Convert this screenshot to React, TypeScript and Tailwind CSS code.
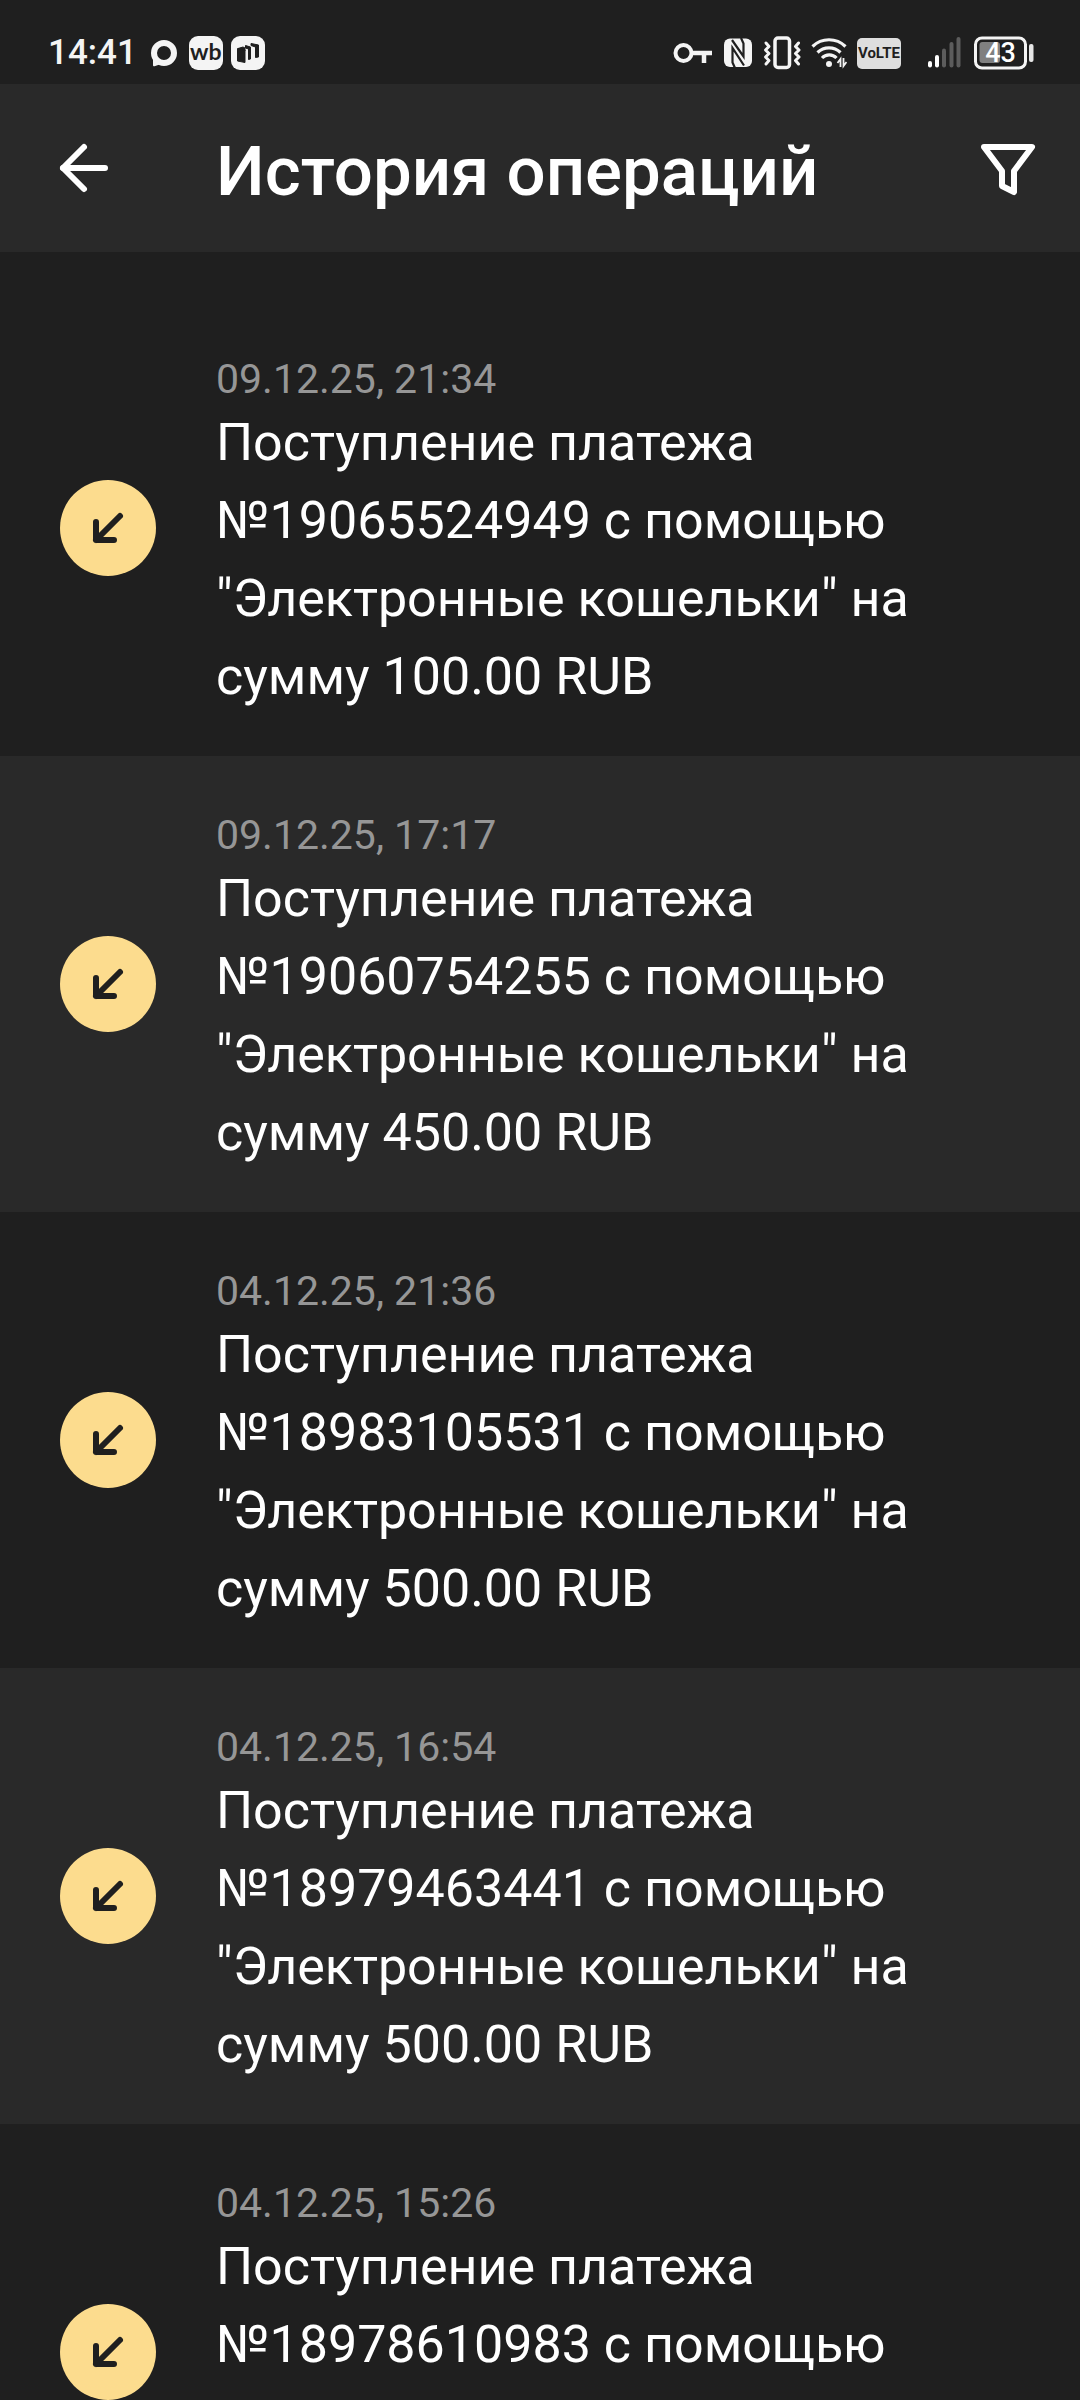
import React from 'react';
import { ArrowLeft } from 'lucide-react';

interface Operation {
  id: string;
  date: string;
  amount: string;
}

const operations: Operation[] = [
  { id: '19065524949', date: '09.12.25, 21:34', amount: '100.00' },
  { id: '19060754255', date: '09.12.25, 17:17', amount: '450.00' },
  { id: '18983105531', date: '04.12.25, 21:36', amount: '500.00' },
  { id: '18979463441', date: '04.12.25, 16:54', amount: '500.00' },
  { id: '18978610983', date: '04.12.25, 15:26', amount: '500.00' },
];

const describe = ({ id, amount }: Operation) =>
  `Поступление платежа №${id} с помощью "Электронные кошельки" на сумму ${amount} RUB`;

const ChatIcon = () => (
  <svg width="26" height="28" viewBox="0 0 26 28" fill="none">
    <circle cx="13" cy="14" r="10" stroke="#f4f4f4" strokeWidth="6" />
    <path d="M2 17v9c0 1 .6 1.4 1.5 1.2L10 25Z" fill="#f4f4f4" />
  </svg>
);

const CardsIcon = () => (
  <svg width="34" height="34" viewBox="0 0 34 34">
    <rect width="34" height="34" rx="9" fill="#f4f4f4" />
    <g fill="#1f1f1f" stroke="#1f1f1f" strokeLinejoin="round">
      <path d="m6.500 12.500 7.500 1.500v12.500l-7.500-1.500Z" />
      <path d="m7 12.500 5-1.500 2 1v3Z" />
      <path d="m14.500 9.500 5 1.500v12l-2 .500V13l-3-1Z" />
      <path d="m20 7.500 7.500 1.500v12l-3 .500V11l-4.500-1.500Z" />
    </g>
  </svg>
);

const KeyIcon = () => (
  <svg width="40" height="34" viewBox="0 0 40 34" fill="none" stroke="#f4f4f4">
    <circle cx="10.500" cy="17" r="8" strokeWidth="4" />
    <path d="M18.500 17H39M31 17v10" strokeWidth="4.500" />
  </svg>
);

const NfcIcon = () => (
  <svg width="30" height="34" viewBox="0 0 30 34">
    <rect x="1" y="2.500" width="28" height="28.500" rx="6" fill="#f4f4f4" />
    <path d="m9 4 11.500 16.500V7.500L18 2M12 32l-2.500-5.500V12L21 29.500" fill="none" stroke="#1f1f1f" strokeWidth="2.200" />
  </svg>
);

const VibrateIcon = () => (
  <svg width="38" height="34" viewBox="0 0 38 34" fill="none" stroke="#f4f4f4" strokeLinecap="round" strokeLinejoin="round">
    <rect x="12" y="2" width="14.500" height="29.500" rx="3" strokeWidth="3.500" />
    <path d="m3 7 3 3.500L2.500 14 6 17.500 2.500 21 6 24.500 3 28" strokeWidth="3" />
    <path d="m35.500 7-3 3.500 3.500 3.500-3.500 3.500L36 21l-3.500 3.500 3 3.500" strokeWidth="3" />
  </svg>
);

const WifiIcon = () => (
  <svg width="36" height="34" viewBox="0 0 36 34" fill="none" stroke="#f4f4f4">
    <path d="M1.500 10.500a23.500 23.500 0 0 1 33 0M6.500 16.500a16.500 16.500 0 0 1 23 0M11 22a10 10 0 0 1 14.500 0" strokeWidth="3.200" />
    <circle cx="18" cy="28" r="3" fill="#f4f4f4" stroke="none" />
    <path d="M29.500 31v-8l-3 4M32.500 22v8l3-4" strokeWidth="1.800" />
  </svg>
);

const SignalIcon = () => (
  <svg width="34" height="34" viewBox="0 0 34 34">
    <rect x="1" y="25" width="4" height="6.500" rx="2" fill="#fff" />
    <rect x="8" y="19" width="4" height="12.500" rx="2" fill="#fff" />
    <rect x="15" y="12.500" width="4" height="19" rx="2" fill="#5c5c5c" />
    <rect x="22.500" y="6" width="4" height="25.500" rx="2" fill="#5c5c5c" />
    <rect x="29.500" y="1" width="4" height="30.500" rx="2" fill="#5c5c5c" />
  </svg>
);

const BatteryIcon = () => (
  <svg width="64" height="34" viewBox="0 0 64 34">
    <rect x="4.500" y="2" width="50" height="30" rx="6.500" fill="none" stroke="#f4f4f4" strokeWidth="3" />
    <rect x="8.500" y="6" width="20.500" height="21" rx="3" fill="#808080" />
    <rect x="58" y="8" width="4.500" height="18" rx="2" fill="#e6e6e6" />
    <text x="29.500" y="26" textAnchor="middle" fill="#fff" fontSize="27" fontWeight="500">43</text>
  </svg>
);

const FilterIcon = () => (
  <svg width="72" height="72" viewBox="0 0 24 24" fill="none" stroke="currentColor" strokeWidth="2" strokeLinejoin="round">
    <path d="M20 5H4l6 8v5l4 2v-7Z" />
  </svg>
);

const IncomingIcon = () => (
  <svg width="48" height="48" viewBox="0 0 48 48" fill="none" stroke="#1f1f1f" strokeWidth="6" strokeLinecap="round" strokeLinejoin="round">
    <path d="M36 12 12 36M12 18v18h18" />
  </svg>
);

const StatusBar = () => (
  <div className="flex h-[84px] shrink-0 items-center justify-between pt-9 pb-[14px] pl-12 pr-[45px]">
    <div className="flex items-center gap-2">
      <span className="mr-1.5 text-[35px] leading-[34px] font-medium text-[#f4f4f4]">14:41</span>
      <ChatIcon />
      <span className="ml-1 flex size-[34px] items-center justify-center rounded-[9px] bg-[#f4f4f4] pb-1 font-['Lato'] text-[23px] leading-[34px] font-bold text-[#1f1f1f]">
        wb
      </span>
      <CardsIcon />
    </div>
    <div className="flex items-center gap-[10px]">
      <KeyIcon />
      <NfcIcon />
      <VibrateIcon />
      <WifiIcon />
      <span className="flex h-[31px] w-11 items-center justify-center rounded-[5px] bg-[#dedede] text-[15px] font-bold text-[#1f1f1f]">
        VoLTE
      </span>
      <span className="ml-4">
        <SignalIcon />
      </span>
      <BatteryIcon />
    </div>
  </div>
);

const OperationRow: React.FC<{ operation: Operation }> = ({ operation }) => (
  <li className="flex items-center gap-[60px] px-[60px] odd:bg-[#1f1f1f] even:bg-[#292929]">
    <div className="flex size-24 shrink-0 items-center justify-center rounded-full bg-[#fcdc8e]">
      <IncomingIcon />
    </div>
    <div className="min-w-0 flex-1 pt-[54px] pb-10">
      <p className="text-[41px] leading-[50px] text-[#969696]">{operation.date}</p>
      <p className="text-[52px] leading-[78px] text-white">{describe(operation)}</p>
    </div>
  </li>
);

const App = () => {
  return (
    <div className="flex h-screen flex-col bg-[#1f1f1f] font-['Roboto',sans-serif]">
      <StatusBar />
      <header className="flex h-[168px] shrink-0 items-center bg-[#292929] pl-12 pr-9 text-white">
        <button type="button" aria-label="Назад">
          <ArrowLeft size={72} />
        </button>
        <h1 className="ml-24 flex-1 pt-2 text-[69px] leading-[80px] font-medium">История операций</h1>
        <button type="button" aria-label="Фильтр">
          <FilterIcon />
        </button>
      </header>
      <main className="min-h-0 flex-1 overflow-y-auto pt-12 [scrollbar-width:none]">
        <ul>
          {operations.map((operation) => (
            <OperationRow key={operation.id} operation={operation} />
          ))}
        </ul>
      </main>
    </div>
  );
};

export default App;
